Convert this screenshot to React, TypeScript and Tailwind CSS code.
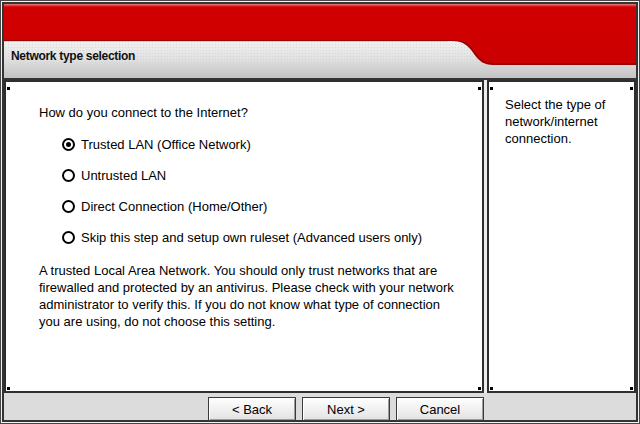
import React from "react";

function Radio({ checked }: { checked?: boolean }) {
  return (
    <span className="flex h-[13px] w-[13px] shrink-0 items-center justify-center rounded-full border-2 border-black bg-white">
      {checked && <span className="h-[5px] w-[5px] rounded-full bg-black" />}
    </span>
  );
}

function Corners() {
  return (
    <>
      <span className="absolute left-[1px] top-[5px] h-[3px] w-[3px] bg-black" />
      <span className="absolute right-[1px] top-[5px] h-[3px] w-[3px] bg-black" />
      <span className="absolute bottom-[1px] left-[1px] h-[3px] w-[3px] bg-black" />
      <span className="absolute bottom-[1px] right-[1px] h-[3px] w-[3px] bg-black" />
    </>
  );
}

function Btn({ children }: { children: React.ReactNode }) {
  return (
    <button className="flex h-[24px] w-[88px] items-center justify-center border border-[#3a3a3a] bg-[linear-gradient(to_bottom,#ffffff,#e2e2e2)] text-[13px] leading-[17px] text-black shadow-[inset_1px_1px_0_#ffffff,inset_-1px_-1px_0_#9c9c9c]">
      {children}
    </button>
  );
}

export default function App() {
  const options = [
    { label: "Trusted LAN (Office Network)", checked: true },
    { label: "Untrusted LAN" },
    { label: "Direct Connection (Home/Other)" },
    { label: "Skip this step and setup own ruleset (Advanced users only)" },
  ];
  return (
    <div className="h-[424px] w-[640px] bg-[#474747] p-px font-['Liberation_Sans',Arial,sans-serif] text-black">
      <div className="h-full w-full bg-[#f2f2f2] p-px">
        <div className="flex h-full w-full flex-col border-2 border-[#343434] bg-[#dcdcdc]">
          {/* Header */}
          <div className="relative h-[74px] shrink-0 overflow-hidden bg-[linear-gradient(to_bottom,#f6f6f6_0%,#f2f2f2_50%,#e0e0e0_75%,#c2c2c2_100%)]">
            <div className="absolute inset-0 bg-[radial-gradient(#cfcfcf_0.7px,transparent_0.9px)] bg-[length:3px_3px] opacity-70" />
            <svg className="absolute left-0 top-0" width="632" height="74" viewBox="0 0 632 74">
              <defs>
                <linearGradient id="rg" x1="0" y1="0" x2="0" y2="60" gradientUnits="userSpaceOnUse">
                  <stop offset="0" stopColor="#ee8080" />
                  <stop offset="0.05" stopColor="#d20000" />
                  <stop offset="1" stopColor="#cb0000" />
                </linearGradient>
              </defs>
              <path d="M0 0 H632 V61 H489 C480 61 475 57 470 50 C464 41 459 37 448 37 H0 Z" fill="#9c0000" />
              <path d="M0 0 H632 V59 H490 C481 59 476 55 471 48 C465 39 460 36 448 36 H0 Z" fill="url(#rg)" />
              <path d="M0 37.5 H444" stroke="#b8b8b8" strokeWidth="1" opacity="0.5" />
            </svg>
            <div className="relative pl-[7px] pt-[45px] text-[12px] font-bold leading-[15px] tracking-[-0.3px] text-[#111]">
              Network type selection
            </div>
          </div>
          <div className="h-[2px] shrink-0 bg-[#343434]" />

          {/* Panels */}
          <div className="flex h-[313px] shrink-0 gap-[3px] bg-[#ececec]">
            <div className="relative w-[480px] shrink-0 border-2 border-[#2e2e2e] bg-white pl-[33px] pt-[22px] text-[13px] leading-[17px]">
              <Corners />
              <div>How do you connect to the Internet?</div>
              <div className="ml-[23px] mt-[15px] flex flex-col gap-[14px]">
                {options.map((o) => (
                  <div key={o.label} className="flex h-[17px] items-center gap-[6px]">
                    <Radio checked={o.checked} />
                    <span className="whitespace-nowrap">{o.label}</span>
                  </div>
                ))}
              </div>
              <div className="mt-[16px] whitespace-nowrap">
                A trusted Local Area Network. You should only trust networks that are
                <br />
                firewalled and protected by an antivirus. Please check with your network
                <br />
                administrator to verify this. If you do not know what type of connection
                <br />
                you are using, do not choose this setting.
              </div>
            </div>
            <div className="relative flex-1 border-2 border-[#2e2e2e] bg-white pl-[16px] pt-[14px] text-[13px] leading-[17px]">
              <Corners />
              <div className="whitespace-nowrap">
                Select the type of
                <br />
                network/internet
                <br />
                connection.
              </div>
            </div>
          </div>

          {/* Button bar */}
          <div className="flex flex-1 justify-end gap-[6px] pr-[152px] pt-[4px]">
            <Btn>&lt; Back</Btn>
            <Btn>Next &gt;</Btn>
            <Btn>Cancel</Btn>
          </div>
        </div>
      </div>
    </div>
  );
}
